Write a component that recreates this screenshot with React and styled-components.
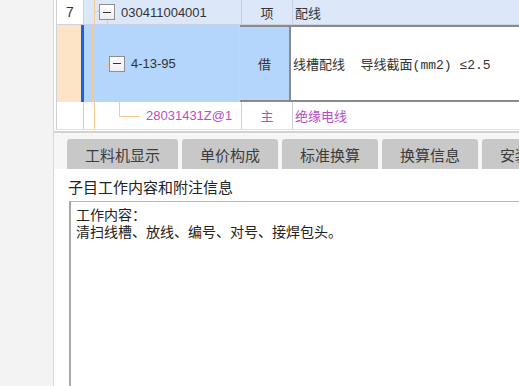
import React from "react";
import styled, { createGlobalStyle } from "styled-components";

const Global = createGlobalStyle`
  html, body {
    margin: 0;
    padding: 0;
    background: #ffffff;
  }
  body {
    font-family: "Noto Sans CJK SC", "Liberation Sans", sans-serif;
    color: #333;
  }
`;

const Page = styled.div`
  display: flex;
  width: 519px;
  height: 386px;
  overflow: hidden;
`;

const LeftPanel = styled.div`
  width: 53px;
  flex-shrink: 0;
  background: #f3f3f3;
  border-right: 1px solid #d8d8d8;
`;

const Main = styled.div`
  flex: 1;
  display: flex;
  flex-direction: column;
  overflow: hidden;
  background: #ffffff;
`;

const Table = styled.div`
  width: 600px;
  margin-left: 2px;
  font-family: "Liberation Sans", "Noto Sans CJK SC", sans-serif;
  font-size: 13px;
`;

const Row = styled.div`
  display: flex;
  height: ${(p) => p.$h}px;
  box-sizing: border-box;
  background: ${(p) => p.$bg || "#ffffff"};
  border-bottom: ${(p) => (p.$line ? `1px solid ${p.$line}` : "none")};
`;

const NumCell = styled.div`
  width: 28px;
  flex-shrink: 0;
  box-sizing: border-box;
  display: flex;
  align-items: center;
  justify-content: center;
  font-size: 14px;
  color: #333;
  background: ${(p) => p.$bg || "#ffffff"};
  border-left: 1px solid #d0d0d0;
  border-right: ${(p) => (p.$active ? "3px solid #1560ef" : "1px solid #d0d0d0")};
  margin-right: ${(p) => (p.$active ? "-2px" : "0")};
  position: relative;
  z-index: 2;
`;

const Cells = styled.div`
  flex: 1;
  display: flex;
  outline: ${(p) => (p.$selected ? "2px solid #8a8a8a" : "none")};
  outline-offset: -2px;
`;

const CodeCell = styled.div`
  position: relative;
  width: 158px;
  flex-shrink: 0;
  box-sizing: border-box;
  display: flex;
  align-items: center;
  padding-left: ${(p) => p.$indent}px;
  background: ${(p) => p.$bg || "transparent"};
  border-right: 1px solid ${(p) => p.$line || "#d0d0d0"};
  color: ${(p) => p.$color || "#333"};
`;

const TypeCell = styled.div`
  width: 51px;
  flex-shrink: 0;
  box-sizing: border-box;
  display: flex;
  align-items: center;
  justify-content: center;
  background: ${(p) => p.$bg || "transparent"};
  border-right: ${(p) => (p.$strong ? "2px solid #8a8a8a" : `1px solid ${p.$line || "#d0d0d0"}`)};
  font-family: "Noto Sans CJK SC", sans-serif;
  color: ${(p) => p.$color || "#333"};
`;

const NameCell = styled.div`
  flex: 1;
  display: flex;
  align-items: center;
  padding-left: 2px;
  white-space: pre;
  font-family: "Liberation Mono", "Noto Sans CJK SC", monospace;
  background: ${(p) => p.$bg || "transparent"};
  color: ${(p) => p.$color || "#333"};
`;

const Guides = styled.svg`
  position: absolute;
  left: 0;
  top: 0;
  width: 100%;
  height: 100%;
  z-index: 0;
`;

const Toggle = styled.span`
  position: relative;
  z-index: 1;
  width: 16px;
  height: 16px;
  box-sizing: border-box;
  border: 1px solid #8f8f8f;
  background: linear-gradient(#ffffff, #eeeeee);
  margin-right: 6px;
  flex-shrink: 0;
  display: flex;
  align-items: center;
  justify-content: center;
  &::after {
    content: "";
    width: 8px;
    height: 1px;
    background: #333;
  }
`;

const Code = styled.span`
  position: relative;
  z-index: 1;
`;

const TableEnd = styled.div`
  height: 1px;
  border-bottom: 2px solid #d3d3d3;
`;

const TabStrip = styled.div`
  display: flex;
  gap: 4px;
  padding: 6px 0 0 13px;
  background: #f6f6f6;
`;

const Tab = styled.div`
  height: 30px;
  padding: 0 18px;
  flex-shrink: 0;
  display: flex;
  align-items: center;
  background: #c8c8c8;
  border-radius: 3px 3px 0 0;
  font-size: 15px;
  color: #3c3c3c;
  white-space: nowrap;
`;

const Content = styled.div`
  flex: 1;
  display: flex;
  flex-direction: column;
  padding: 8px 0 0 14px;
  background: #ffffff;
`;

const Label = styled.div`
  font-size: 15px;
  line-height: 20px;
  color: #222;
`;

const NoteBox = styled.div`
  flex: 1;
  margin: 4px 0 0 1px;
  padding: 4px 5px;
  border-top: 1px solid #b8b8b8;
  border-left: 2px solid #a8a8a8;
  font-size: 14px;
  line-height: 17px;
  color: #222;
`;

const orange = "#f9c98e";

const Line = ({ x1, y1, x2, y2 }) => (
  <line x1={x1} y1={y1} x2={x2} y2={y2} stroke={orange} strokeWidth="1" />
);

const tabs = ["工料机显示", "单价构成", "标准换算", "换算信息", "安装费用"];

export default function App() {
  return (
    <>
      <Global />
      <Page>
        <LeftPanel />
        <Main>
          <Table>
            <Row $h={25} $bg="#dce8fa" $line="#c9d3e3">
              <NumCell>7</NumCell>
              <Cells>
                <CodeCell $indent={15} $line="#c5cfdf">
                  <Guides>
                    <Line x1={10.5} y1={0} x2={10.5} y2={25} />
                    <Line x1={10.5} y1={11.5} x2={15} y2={11.5} />
                    <Line x1={23.5} y1={19} x2={23.5} y2={25} />
                  </Guides>
                  <Toggle />
                  <Code>030411004001</Code>
                </CodeCell>
                <TypeCell $line="#c5cfdf">项</TypeCell>
                <NameCell>配线</NameCell>
              </Cells>
            </Row>
            <Row $h={77}>
              <NumCell $bg="#fde4c6" $active />
              <Cells $selected>
                <CodeCell $indent={27} $bg="#b4d5fc" $line="#c4d6ee">
                  <Guides>
                    <Line x1={10.5} y1={0} x2={10.5} y2={77} />
                    <Line x1={23.5} y1={0} x2={23.5} y2={39.5} />
                    <Line x1={23.5} y1={39.5} x2={27} y2={39.5} />
                    <Line x1={35.5} y1={47} x2={35.5} y2={77} />
                  </Guides>
                  <Toggle />
                  <Code>4-13-95</Code>
                </CodeCell>
                <TypeCell $bg="#b4d5fc" $strong>借</TypeCell>
                <NameCell>{"线槽配线  导线截面(mm2) ≤2.5"}</NameCell>
              </Cells>
            </Row>
            <Row $h={28} $line="#e2e2e2">
              <NumCell />
              <Cells>
                <CodeCell $indent={62} $color="#b44fc6">
                  <Guides>
                    <Line x1={10.5} y1={0} x2={10.5} y2={28} />
                    <Line x1={35.5} y1={0} x2={35.5} y2={14.5} />
                    <Line x1={35.5} y1={14.5} x2={56} y2={14.5} />
                  </Guides>
                  <Code>28031431Z@1</Code>
                </CodeCell>
                <TypeCell $color="#b44fc6">主</TypeCell>
                <NameCell $color="#b44fc6">绝缘电线</NameCell>
              </Cells>
            </Row>
          </Table>
          <TableEnd />
          <TabStrip>
            {tabs.map((t) => (
              <Tab key={t}>{t}</Tab>
            ))}
          </TabStrip>
          <Content>
            <Label>子目工作内容和附注信息</Label>
            <NoteBox>
              工作内容：
              <br />
              清扫线槽、放线、编号、对号、接焊包头。
            </NoteBox>
          </Content>
        </Main>
      </Page>
    </>
  );
}
